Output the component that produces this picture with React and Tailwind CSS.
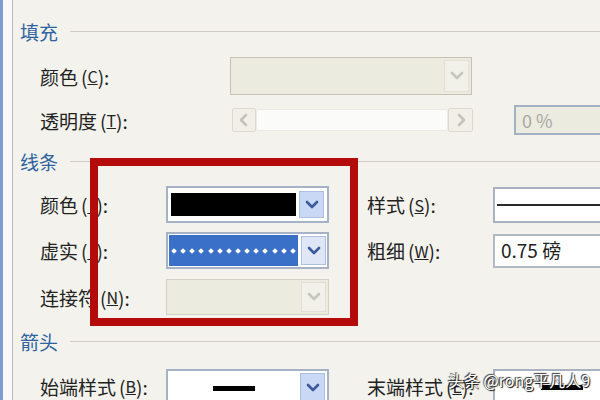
import React from 'react';

const font = { fontFamily: '"Noto Sans CJK SC", "Noto Sans", sans-serif' };

const Chevron = ({ color = '#3b5b9c', left = false, right = false }) => {
  let pts = '4,6 9,11 14,6';
  if (left) pts = '11,4 6,9 11,14';
  if (right) pts = '7,4 12,9 7,14';
  return (
    <svg width="18" height="18" viewBox="0 0 18 18">
      <polyline points={pts} fill="none" stroke={color} strokeWidth="2.6" strokeLinecap="round" strokeLinejoin="round" />
    </svg>
  );
};

const Label = ({ text, k, w }) => (
  <div className={`${w} shrink-0 text-[19px] text-[#222] leading-none flex items-center whitespace-nowrap`}>
    {text}
    <span className="ml-[3px]">(</span>
    <span className="underline text-[16px]">{k}</span>
    <span>):</span>
  </div>
);

const Header = ({ text }) => (
  <div className="h-5 flex items-center pl-[7px]">
    <span className="text-[19px] leading-none text-[#2f62a0]">{text}</span>
    <div className="flex-1 h-px bg-[#cfcdc4] ml-3" />
  </div>
);

const DropButton = ({ disabled, className = '' }) => (
  <div
    className={`w-[25px] shrink-0 flex items-center justify-center border ${
      disabled ? 'bg-[#f1f0e9] border-[#e2e0d6]' : 'bg-[#c9d8f4] border-[#aebfe0]'
    } ${className}`}
  >
    <Chevron color={disabled ? '#c7c6be' : '#3b5b9c'} />
  </div>
);

const App = () => {
  return (
    <div className="relative w-[600px] h-[400px] overflow-hidden flex bg-[#f3f2ec]" style={font}>
      <div className="w-[3px] shrink-0 bg-[#7f9dcf]" />
      <div className="w-[9px] shrink-0 bg-[#f9f9f7]" />
      <div className="w-px shrink-0 bg-[#b9b8b0]" />

      <div className="flex-1 min-w-0 flex flex-col pt-[22px]">
        <Header text="填充" />

        <div className="flex h-[38px] mt-4 items-center pl-[27px]">
          <Label text="颜色" k="C" w="w-[190px]" />
          <div className="w-[242px] h-[38px] shrink-0 flex border border-[#c5c3b6] bg-[#ecebe0] p-[2px] justify-end">
            <DropButton disabled />
          </div>
        </div>

        <div className="flex h-[30px] mt-[10px] items-center pl-[27px]">
          <Label text="透明度" k="T" w="w-[192px]" />
          <div className="w-[241px] h-[24px] shrink-0 flex">
            <div className="w-[24px] flex items-center justify-center border border-[#dcdad0] bg-[#f0efe8] rounded-[2px]">
              <Chevron left color="#c4c3bb" />
            </div>
            <div className="flex-1 my-[1px] bg-[#fbfbf9] border border-[#ecebe4] rounded-[3px]" />
            <div className="w-[25px] flex items-center justify-center border border-[#dcdad0] bg-[#f0efe8] rounded-[2px]">
              <Chevron right color="#c4c3bb" />
            </div>
          </div>
          <div className="ml-[41px] w-[100px] h-[30px] shrink-0 border-2 border-[#a4b0c4] bg-[#ecebe0] flex items-center pl-[6px] text-[18px] text-[#a9a8a0]">
            0 %
          </div>
        </div>

        <div className="mt-4">
          <Header text="线条" />
        </div>

        <div className="flex h-[37px] mt-[15px] items-center pl-[27px]">
          <Label text="颜色" k="_" w="w-[126px]" />
          <div className="w-[163px] h-[37px] shrink-0 flex border-2 border-[#a6b3c6] bg-white p-[3px] gap-[3px]">
            <div className="flex-1 bg-black my-[2px]" />
            <DropButton />
          </div>
          <div className="ml-[38px]">
            <Label text="样式" k="S" w="w-[126px]" />
          </div>
          <div className="flex-1 h-[36px] border-2 border-r-0 border-[#a9b2bf] bg-white flex items-center pl-[2px]">
            <div className="flex-1 h-[2px] bg-[#2a2a2a]" />
          </div>
        </div>

        <div className="flex h-[37px] mt-[9px] items-center pl-[27px]">
          <Label text="虚实" k="_" w="w-[126px]" />
          <div className="w-[163px] h-[37px] shrink-0 flex border-2 border-[#a6b3c6] bg-white p-[1px] gap-[3px]">
            <div className="flex-1 bg-[#3a70c8] flex items-center justify-between px-[3px]">
              {Array.from({ length: 14 }).map((_, i) => (
                <span key={i} className="w-[4px] h-[4px] bg-white rotate-45" />
              ))}
            </div>
            <DropButton className="my-[1px] bg-[#dfe7f6]" />
          </div>
          <div className="ml-[38px]">
            <Label text="粗细" k="W" w="w-[126px]" />
          </div>
          <div className="flex-1 h-[34px] border-2 border-r-0 border-[#b3b9c2] bg-white flex items-center pl-[6px] text-[19px] text-[#222]">
            0.75 磅
          </div>
        </div>

        <div className="flex h-[36px] mt-[10px] items-center pl-[27px]">
          <Label text="连接符" k="N" w="w-[126px]" />
          <div className="w-[163px] h-[36px] shrink-0 flex border border-[#d4d2c6] bg-[#ecebe0] p-[2px] justify-end">
            <DropButton disabled />
          </div>
        </div>

        <div className="mt-4">
          <Header text="箭头" />
        </div>

        <div className="flex h-[34px] mt-[18px] items-center pl-[27px]">
          <Label text="始端样式" k="B" w="w-[126px]" />
          <div className="w-[163px] h-[34px] shrink-0 flex border-2 border-b-0 border-[#a6b3c6] bg-white p-[2px] pb-0 gap-[3px]">
            <div className="flex-1 flex items-center justify-center">
              <div className="w-[42px] h-[5px] bg-black" />
            </div>
            <DropButton />
          </div>
          <div className="ml-[38px]">
            <Label text="末端样式" k="E" w="w-[126px]" />
          </div>
          <div className="flex-1 h-[34px] border-2 border-r-0 border-b-0 border-[#a9b2bf] bg-white flex items-center pl-[46px]">
            <div className="w-[42px] h-[5px] bg-black" />
          </div>
        </div>
      </div>

      <div className="absolute left-[90px] top-[158px] w-[268px] h-[168px] border-[8px] border-[#b40a0a]" />

      <div className="absolute left-[448px] top-[372px] text-[16px] text-white leading-none whitespace-nowrap [text-shadow:1px_1px_1px_#000,-1px_-1px_1px_#333]">
        头条 @rong平凡人9
      </div>
    </div>
  );
};

export default App;
